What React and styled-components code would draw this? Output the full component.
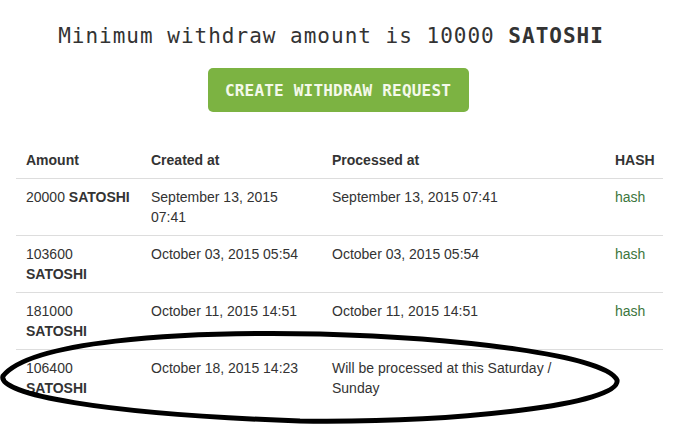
import React from "react";
import styled, { createGlobalStyle } from "styled-components";

const Global = createGlobalStyle`
  html, body { margin: 0; padding: 0; background: #fff; }
  body { font-family: "Liberation Sans", Arial, sans-serif; color: #333; }
`;

const Page = styled.div`
  position: relative;
  width: 692px;
  height: 426px;
  overflow: hidden;
  padding: 21px 16px 0 0;
  box-sizing: border-box;
  display: flex;
  flex-direction: column;
  align-items: center;
`;

const Title = styled.h3`
  margin: 0 14px 0 0;
  font-family: "DejaVu Sans Mono", "Liberation Mono", monospace;
  font-weight: normal;
  font-size: 21px;
  letter-spacing: 1px;
  line-height: 30px;
  color: #333;
  text-align: center;
  b { font-weight: bold; }
`;

const Button = styled.button`
  margin-top: 17px;
  width: 261px;
  height: 44px;
  border: none;
  border-radius: 5px;
  background: #7cb342;
  color: #f4f9ea;
  font-family: "DejaVu Sans Mono", "Liberation Mono", monospace;
  font-weight: bold;
  font-size: 16px;
  letter-spacing: 0.2px;
  padding: 0;
  cursor: pointer;
`;

const Table = styled.table`
  margin-top: 30px;
  align-self: flex-start;
  margin-left: 16px;
  width: 647px;
  border-collapse: collapse;
  table-layout: fixed;
  font-size: 14px;
  line-height: 20px;
`;

const Th = styled.th`
  text-align: left;
  font-weight: bold;
  padding: 8px 6px 8px 10px;
  border-bottom: 1px solid #ddd;
  vertical-align: bottom;
  white-space: nowrap;
`;

const Td = styled.td`
  padding: 8px 6px 8px 10px;
  vertical-align: top;
  border-top: ${(p) => (p.$first ? "none" : "1px solid #ddd")};
`;

const Hash = styled.a`
  color: #3c763d;
  text-decoration: none;
`;

const Overlay = styled.svg`
  position: absolute;
  left: 0;
  top: 0;
  pointer-events: none;
`;

const rows = [
  { amount: "20000", created: "September 13, 2015 07:41", processed: "September 13, 2015 07:41", hash: true },
  { amount: "103600", created: "October 03, 2015 05:54", processed: "October 03, 2015 05:54", hash: true },
  { amount: "181000", created: "October 11, 2015 14:51", processed: "October 11, 2015 14:51", hash: true },
  { amount: "106400", created: "October 18, 2015 14:23", processed: "Will be processed at this Saturday / Sunday", hash: false },
];

export default function App() {
  return (
    <>
      <Global />
      <Page>
        <Title>
          Minimum withdraw amount is 10000 <b>SATOSHI</b>
        </Title>
        <Button>CREATE WITHDRAW REQUEST</Button>
        <Table>
          <colgroup>
            <col style={{ width: 125 }} />
            <col style={{ width: 181 }} />
            <col style={{ width: 283 }} />
            <col style={{ width: 58 }} />
          </colgroup>
          <thead>
            <tr>
              <Th>Amount</Th>
              <Th>Created at</Th>
              <Th>Processed at</Th>
              <Th>HASH</Th>
            </tr>
          </thead>
          <tbody>
            {rows.map((r, i) => (
              <tr key={i}>
                <Td $first={i === 0}>
                  {r.amount} <b>SATOSHI</b>
                </Td>
                <Td $first={i === 0}>{r.created}</Td>
                <Td $first={i === 0}>{r.processed}</Td>
                <Td $first={i === 0}>{r.hash && <Hash href="#">hash</Hash>}</Td>
              </tr>
            ))}
          </tbody>
        </Table>
        <Overlay width="692" height="426" viewBox="0 0 692 426">
          <path
            d="M 617 380 C 605 355, 460 338, 320 334 C 170 331, 30 342, 3 376 C -3 394, 100 414, 300 421 C 460 423, 622 404, 617 380 Z"
            fill="none"
            stroke="#000"
            strokeWidth="5"
            strokeLinejoin="round"
          />
        </Overlay>
      </Page>
    </>
  );
}
